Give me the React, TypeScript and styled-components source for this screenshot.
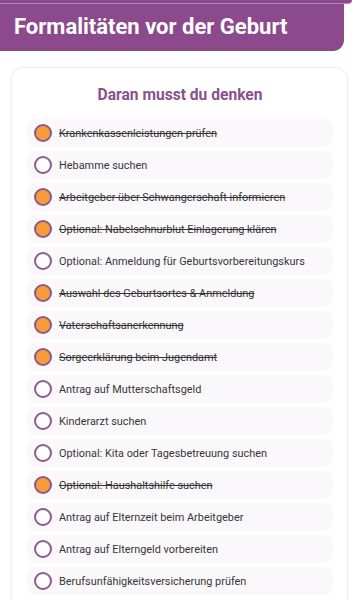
import styled, { createGlobalStyle } from "styled-components";

const Global = createGlobalStyle`
    body{
        margin: 0;
        background: #ffffff;
        font-family: Roboto, "Noto Sans", sans-serif;
    }
    *{ box-sizing: border-box; }
`

const purple = '#8c4a8d'

const Page = styled.div`
    width: 360px;
    height: 600px;
    overflow: hidden;
    display: flex;
    flex-direction: column;
    >*{ flex: none; }
`
const TopEdge = styled.div`
    width: 352px;
    height: 3px;
    background-color: ${purple};
    border-bottom-right-radius: 12px;
    border-bottom: 1px solid #b489b5;
    box-sizing: content-box;
`
const Header = styled.div`
    width: 344px;
    height: 47px;
    background-color: ${purple};
    border-bottom-right-radius: 11px;
    display: flex;
    align-items: center;
    padding: 0 0 2px 14px;
    >h1{
        margin: 0;
        color: #ffffff;
        font-size: 22px;
        font-weight: 700;
    }
`
const Card = styled.div`
    margin: 17px 13px 0 12px;
    background-color: #ffffff;
    border-radius: 12px;
    box-shadow: 0 0 3px rgba(0,0,0,.18);
    padding: 14px 14px 20px 15px;
    display: flex;
    flex-direction: column;
    >h2{
        margin: 0 0 11px;
        text-align: center;
        color: #8a518c;
        font-size: 15.6px;
        font-weight: 700;
        line-height: 26px;
    }
    >ul{
        list-style: none;
        margin: 0;
        padding: 0;
        display: flex;
        flex-direction: column;
        gap: 4px;
    }
`
const Item = styled.li<{ $done: boolean }>`
    height: 28px;
    background-color: #faf8fb;
    border-radius: 8px;
    display: flex;
    align-items: center;
    gap: 7px;
    padding-left: 7px;
    font-size: 10.9px;
    color: #363636;
    white-space: nowrap;
    text-decoration: ${p => p.$done ? 'line-through' : 'none'};
`
const Dot = styled.span<{ $done: boolean }>`
    width: 18px;
    height: 18px;
    flex: none;
    border-radius: 50%;
    border: 2px solid #8a5a8b;
    background-color: ${p => p.$done ? '#f89b3a' : '#ffffff'};
`

const items: [string, boolean][] = [
    ['Krankenkassenleistungen prüfen', true],
    ['Hebamme suchen', false],
    ['Arbeitgeber über Schwangerschaft informieren', true],
    ['Optional: Nabelschnurblut Einlagerung klären', true],
    ['Optional: Anmeldung für Geburtsvorbereitungskurs', false],
    ['Auswahl des Geburtsortes & Anmeldung', true],
    ['Vaterschaftsanerkennung', true],
    ['Sorgeerklärung beim Jugendamt', true],
    ['Antrag auf Mutterschaftsgeld', false],
    ['Kinderarzt suchen', false],
    ['Optional: Kita oder Tagesbetreuung suchen', false],
    ['Optional: Haushaltshilfe suchen', true],
    ['Antrag auf Elternzeit beim Arbeitgeber', false],
    ['Antrag auf Elterngeld vorbereiten', false],
    ['Berufsunfähigkeitsversicherung prüfen', false],
]

export default function App() {
    return <Page>
        <Global />
        <TopEdge />
        <Header>
            <h1>Formalitäten vor der Geburt</h1>
        </Header>
        <Card>
            <h2>Daran musst du denken</h2>
            <ul>
                {items.map(([label, done]) =>
                    <Item key={label} $done={done}>
                        <Dot $done={done} />
                        {label}
                    </Item>
                )}
            </ul>
        </Card>
    </Page>
}
